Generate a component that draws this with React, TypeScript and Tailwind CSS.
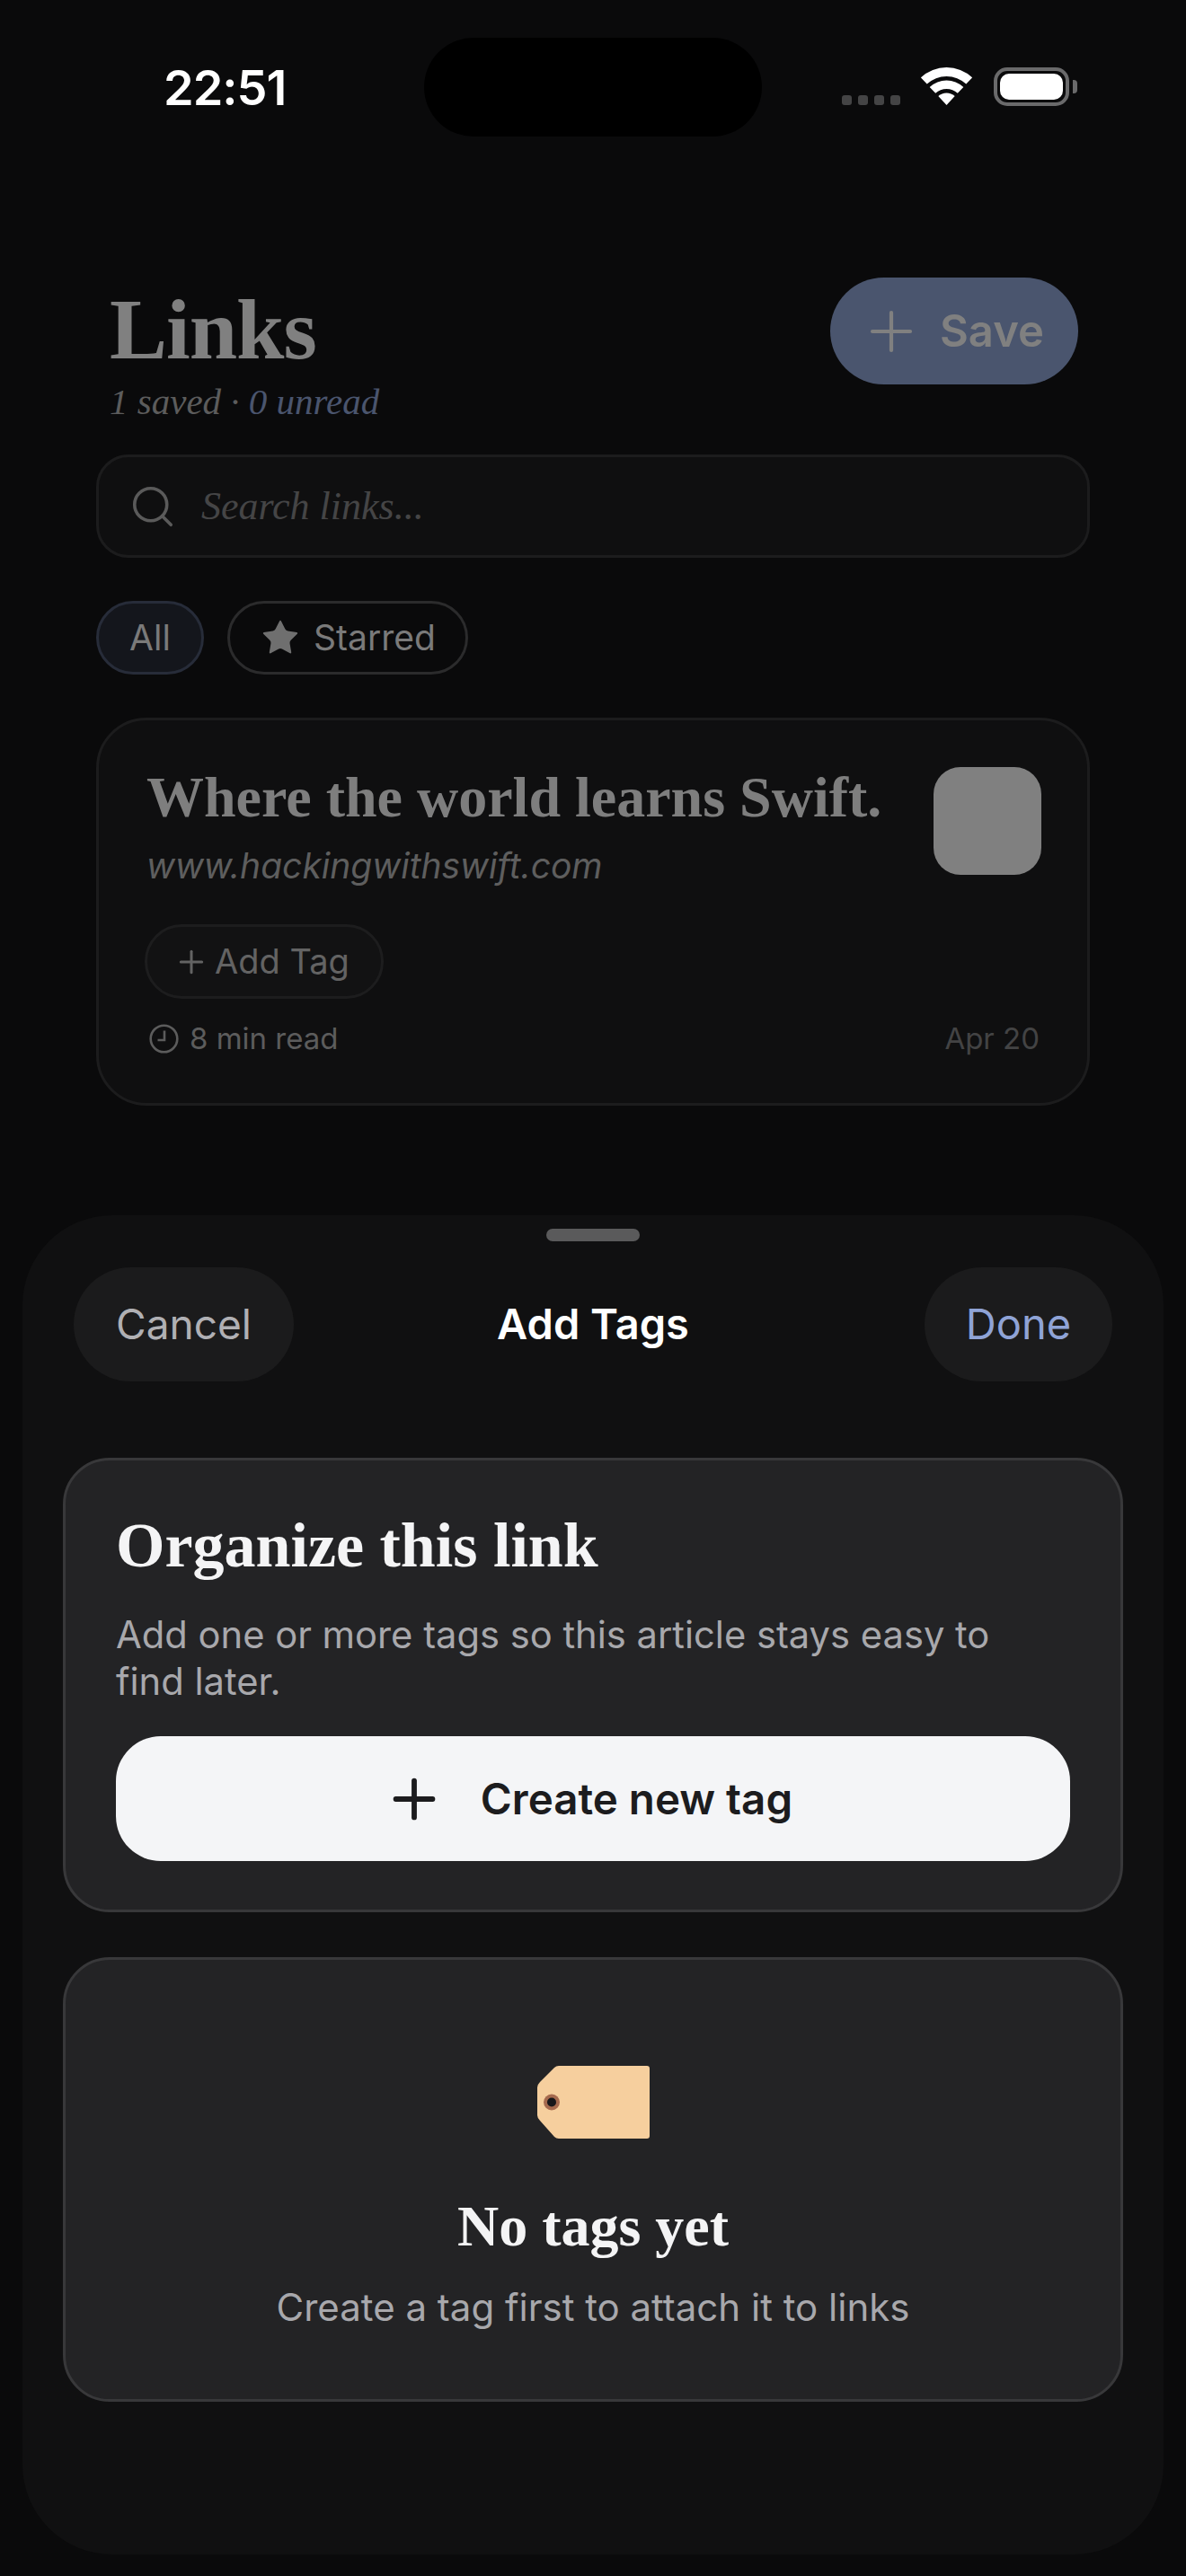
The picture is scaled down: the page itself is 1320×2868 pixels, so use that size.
import React from 'react';
import { Plus, Search, Star } from 'lucide-react';

const serif = "font-['Liberation_Serif',serif]";
const sans = "font-['Inter',sans-serif]";

const StatusBar: React.FC = () => (
  <div className="h-[152px] pt-[42px] flex items-start">
    <div className={`${sans} w-[472px] pl-[182px] pt-[32px] text-[54px] leading-[48px] font-semibold text-white tracking-[-1px]`}>
      22:51
    </div>
    <div className="w-[376px] h-[110px] rounded-[55px] bg-black" />
    <div className="flex items-start pt-[33px] pl-[89px]">
      {/* Cellular placeholder dots */}
      <div className="flex gap-[7px] pt-[31px]">
        <div className="w-[11px] h-[11px] rounded-[3px] bg-[#444445]" />
        <div className="w-[11px] h-[11px] rounded-[3px] bg-[#444445]" />
        <div className="w-[11px] h-[11px] rounded-[3px] bg-[#444445]" />
        <div className="w-[11px] h-[11px] rounded-[3px] bg-[#444445]" />
      </div>
      <svg width="57" height="42" viewBox="0 0 57 42" className="ml-[23px]" fill="#fff">
        <path d="M-0.1 11.3A42 42 0 0 1 57.1 11.3L50.3 18.6A32 32 0 0 0 6.7 18.6Z" />
        <path d="M9.7 21.9A27.5 27.5 0 0 1 47.3 21.9L40.8 28.8A18 18 0 0 0 16.2 28.8Z" />
        <path d="M19.3 32.1A13.5 13.5 0 0 1 37.7 32.1L28.5 42Z" />
      </svg>
      <div className="ml-[24px] w-[84px] h-[43px] rounded-[15px] border-[4px] border-[#6a6a6b] p-[3px]">
        <div className="w-full h-full rounded-[10px] bg-white" />
      </div>
      <div className="ml-[4px] mt-[14px] w-[5px] h-[15px] rounded-r-[4px] bg-[#6a6a6b]" />
    </div>
  </div>
);

const LinksScreen: React.FC = () => (
  <div className="px-[107px]">
    {/* Header */}
    <div className="flex justify-between items-start pt-[157px] pl-[15px] pr-[13px]">
      <div className="pt-[10px]">
        <h1 className={`${serif} text-[96px] leading-[96px] font-bold text-[#808080] tracking-[-1px]`}>Links</h1>
        <p className={`${serif} text-[41px] leading-[44px] italic text-[#5c5c5c] mt-[10px]`}>
          1 saved · <span className="text-[#4a556e]">0 unread</span>
        </p>
      </div>
      <button className={`${sans} w-[276px] h-[119px] rounded-[60px] bg-[#4a556e] flex items-center justify-center gap-[18px] pr-[6px] font-semibold text-[#808080]`}>
        <Plus size={72} strokeWidth={1.4} />
        <span className="text-[49px]">Save</span>
      </button>
    </div>

    {/* Search */}
    <div className="mt-[37px] h-[115px] rounded-[36px] bg-[#0f0f10] border-[3px] border-[#1c1c1d] flex items-center pl-[33px] gap-[27px]">
      <Search size={54} strokeWidth={1.6} className="text-[#5a5a5a]" />
      <span className={`${serif} text-[44px] italic text-[#454546]`}>Search links...</span>
    </div>

    {/* Filter chips */}
    <div className="mt-[48px] flex gap-[26px]">
      <div className={`${sans} w-[120px] h-[82px] rounded-[41px] bg-[#14161c] border-[3px] border-[#272c39] flex items-center justify-center text-[39px] text-[#7a7a7a]`}>
        All
      </div>
      <div className={`${sans} w-[268px] h-[82px] rounded-[41px] border-[3px] border-[#2b2b2c] flex items-center justify-center gap-[14px] text-[39px] text-[#7a7a7a]`}>
        <Star size={46} fill="#6f6f6f" strokeWidth={0} />
        <span>Starred</span>
      </div>
    </div>

    {/* Link card */}
    <div className="mt-[48px] h-[432px] rounded-[56px] bg-[#0f0f10] border-[3px] border-[#1c1c1d] pl-[53px] pr-[51px]">
      <div className="flex justify-between pt-[50px]">
        <div>
          <h2 className={`${serif} text-[64px] leading-[72px] font-bold text-[#7e7e7e]`}>Where the world learns Swift.</h2>
          <p className={`${sans} mt-[17px] text-[39px] leading-[46px] italic text-[#5e5e5e]`}>www.hackingwithswift.com</p>
        </div>
        <div className="w-[120px] h-[120px] mt-[2px] rounded-[30px] bg-[#808080]" />
      </div>
      <div className={`${sans} mt-[42px] -ml-[2px] w-[266px] h-[83px] rounded-[42px] bg-[#121213] border-[3px] border-[#1d1d1e] flex items-center justify-center gap-[6px] pr-[6px] text-[38px] text-[#636363]`}>
        <Plus size={40} strokeWidth={1.8} />
        <span>Add Tag</span>
      </div>
      <div className={`${sans} mt-[24px] flex justify-between items-center text-[33px] leading-[40px]`}>
        <div className="flex items-center gap-[12px] text-[#5c5c5c] pl-[3px]">
          <svg width="33" height="33" viewBox="0 0 33 33" fill="none" stroke="#5c5c5c" strokeWidth="2.6">
            <circle cx="16.5" cy="16.5" r="14.8" />
            <path d="M17 7.5V18H9.5" />
          </svg>
          <span>8 min read</span>
        </div>
        <span className="text-[#434344] pr-[2px]">Apr 20</span>
      </div>
    </div>
  </div>
);

const AddTagsSheet: React.FC = () => (
  <div className="mt-[122px] mx-[25px] h-[1491px] rounded-[100px] bg-[#101011] flex flex-col items-center">
    <div className="mt-[15px] w-[104px] h-[14px] rounded-[7px] bg-[#5a5a5b]" />

    {/* Sheet nav bar */}
    <div className={`${sans} mt-[29px] w-full px-[57px] grid grid-cols-[1fr_auto_1fr] items-center`}>
      <div className="w-[245px] h-[127px] rounded-[64px] bg-[#1b1b1c] flex items-center justify-center text-[46px] text-[#b0b0b4]">
        Cancel
      </div>
      <div className="text-[47px] font-semibold text-white">Add Tags</div>
      <div className="justify-self-end w-[209px] h-[127px] rounded-[64px] bg-[#1b1b1c] flex items-center justify-center text-[47px] text-[#8fa3d6]">
        Done
      </div>
    </div>

    {/* Organize card */}
    <div className="mt-[85px] w-[1180px] h-[506px] rounded-[52px] bg-[#232325] border-[3px] border-[#38383a] px-[56px] pt-[54px]">
      <h3 className={`${serif} text-[70px] leading-[82px] font-bold text-[#f4f4f5]`}>Organize this link</h3>
      <p className={`${sans} mt-[32px] text-[41.7px] leading-[52px] text-[#a8a8ac]`}>
        Add one or more tags so this article stays easy to
        <br />
        find later.
      </p>
      <button className={`${sans} mt-[35px] w-full h-[139px] rounded-[50px] bg-[#f4f5f7] flex items-center justify-center gap-[39px] pr-[12px] text-[47.5px] font-semibold text-[#1c1c1e]`}>
        <Plus size={70} strokeWidth={2} />
        <span>Create new tag</span>
      </button>
    </div>

    {/* Empty state */}
    <div className="mt-[50px] w-[1180px] h-[495px] rounded-[52px] bg-[#232325] border-[3px] border-[#38383a] flex flex-col items-center pt-[118px]">
      <svg width="125" height="81" viewBox="0 0 125 81">
        <path d="M24 0H122Q125 0 125 3V78Q125 81 122 81H24Q21 81 19 79L3 61Q0 58 0 55V24Q0 21 3 18L19 2Q21 0 24 0Z" fill="#f6cf9e" />
        <circle cx="16" cy="40.5" r="9" fill="#a66a4e" />
        <circle cx="16" cy="40.5" r="5" fill="#17171a" />
      </svg>
      <h3 className={`${serif} mt-[58px] text-[64px] leading-[80px] font-bold text-[#f4f4f5]`}>No tags yet</h3>
      <p className={`${sans} mt-[24px] text-[42px] leading-[52px] text-[#a8a8ac]`}>Create a tag first to attach it to links</p>
    </div>
  </div>
);

export default function App() {
  return (
    <div className="w-[1320px] h-[2868px] bg-[#0a0a0b] overflow-hidden">
      <StatusBar />
      <LinksScreen />
      <AddTagsSheet />
    </div>
  );
}
